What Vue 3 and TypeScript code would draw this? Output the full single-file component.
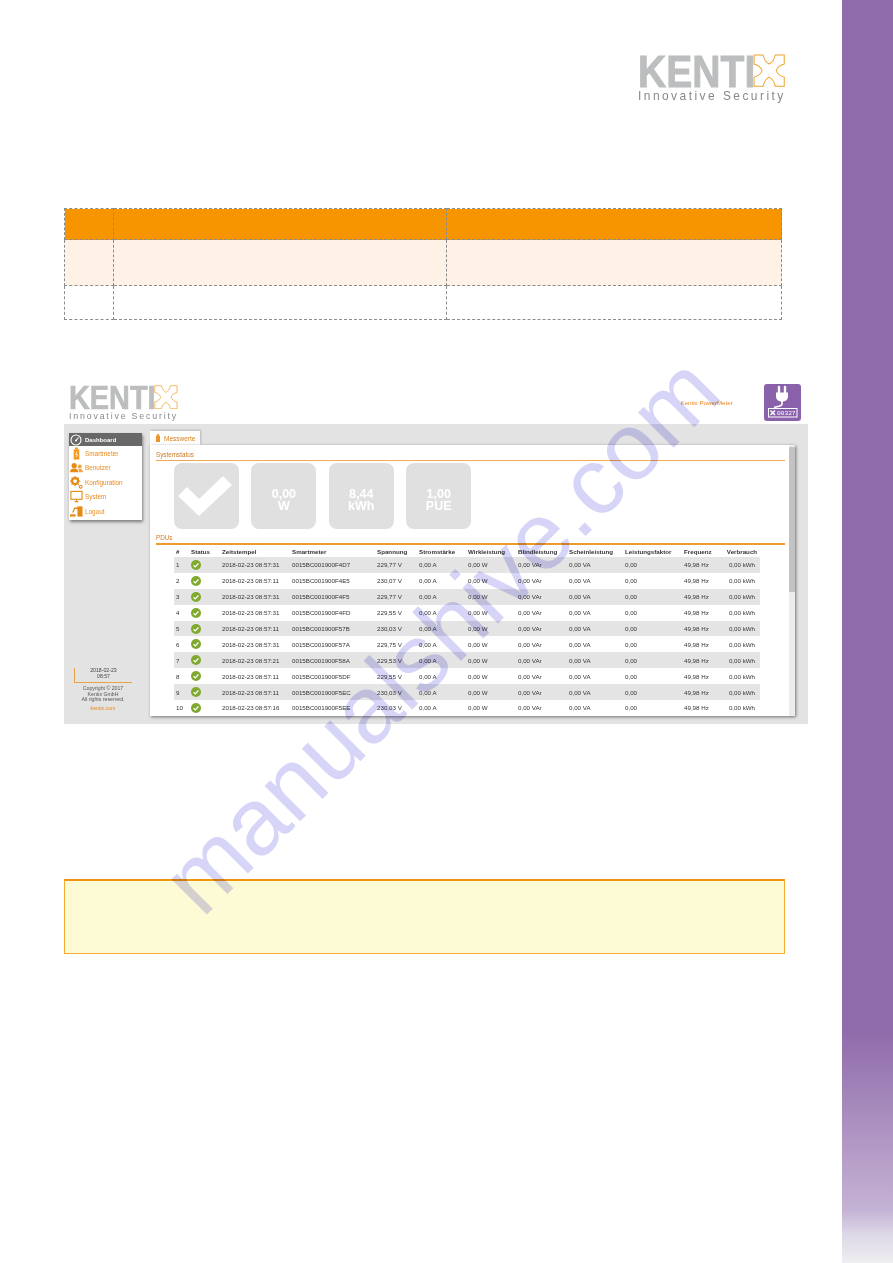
<script setup lang="ts">
interface Row {
  id: number
  time: string
  meter: string
  volt: string
}

const columns = ['#', 'Status', 'Zeitstempel', 'Smartmeter', 'Spannung', 'Stromstärke', 'Wirkleistung', 'Blindleistung', 'Scheinleistung', 'Leistungsfaktor', 'Frequenz', 'Verbrauch']
const widths = [15, 31, 70, 85, 42, 49, 50, 51, 56, 59, 40, 38]

const rows: Row[] = [
  { id: 1, time: '08:57:31', meter: '0015BC001900F4D7', volt: '229,77 V' },
  { id: 2, time: '08:57:11', meter: '0015BC001900F4E5', volt: '230,07 V' },
  { id: 3, time: '08:57:31', meter: '0015BC001900F4F5', volt: '229,77 V' },
  { id: 4, time: '08:57:31', meter: '0015BC001900F4FD', volt: '229,55 V' },
  { id: 5, time: '08:57:11', meter: '0015BC001900F57B', volt: '230,03 V' },
  { id: 6, time: '08:57:31', meter: '0015BC001900F57A', volt: '229,75 V' },
  { id: 7, time: '08:57:21', meter: '0015BC001900F58A', volt: '229,53 V' },
  { id: 8, time: '08:57:11', meter: '0015BC001900F5DF', volt: '229,55 V' },
  { id: 9, time: '08:57:11', meter: '0015BC001900F5EC', volt: '230,03 V' },
  { id: 10, time: '08:57:16', meter: '0015BC001900F5EE', volt: '230,03 V' }
]

const tiles = [
  ['0,00', 'W'],
  ['8,44', 'kWh'],
  ['1,00', 'PUE']
]

const xPath = 'M1 1H10C11 6 14 9 16 10C18 9 21 6 22 1H31V10C27 11 24 14 23 16.5C24 19 27 22 31 23V32H22C21 27 18 24 16 23C14 24 11 27 10 32H1V23C5 22 8 19 9 16.5C8 14 5 11 1 10Z'
</script>

<template>
  <div class="page">
    <main class="main">
      <div class="logo logo-top">
        <div class="logo-mark">
          <span class="logo-word">KENTI</span>
          <svg class="logo-x" viewBox="0 0 32 33"><path :d="xPath" /></svg>
        </div>
        <div class="logo-tag">Innovative Security</div>
      </div>

      <table class="doc-table">
        <colgroup>
          <col style="width: 49px" />
          <col style="width: 333px" />
          <col />
        </colgroup>
        <tbody>
          <tr class="doc-head"><td></td><td></td><td></td></tr>
          <tr class="doc-tint"><td></td><td></td><td></td></tr>
          <tr class="doc-plain"><td></td><td></td><td></td></tr>
        </tbody>
      </table>

      <section class="shot">
        <header class="shot-head">
          <div class="logo logo-small">
            <div class="logo-mark">
              <span class="logo-word">KENTI</span>
              <svg class="logo-x" viewBox="0 0 32 33"><path :d="xPath" /></svg>
            </div>
            <div class="logo-tag">Innovative Security</div>
          </div>
          <span class="app-title">Kentix PowerMeter</span>
          <svg class="app-icon" viewBox="0 0 37 37">
            <rect width="37" height="37" rx="3" fill="#8a62ab" />
            <path d="M15 3v6M21 3v6" stroke="#fff" stroke-width="2.4" stroke-linecap="round" />
            <path d="M12 8.500h12v4c0 3-2.500 5-6 5s-6-2-6-5z" fill="#fff" />
            <path d="M18 17v3c0 2.500-4 2-8 3.500" stroke="#fff" stroke-width="1.600" fill="none" />
            <rect x="4.500" y="24.500" width="28.500" height="8.500" fill="none" stroke="#fff" />
            <path d="M6.500 26.500l4.500 4.500M11 26.500l-4.500 4.500" stroke="#fff" stroke-width="1.400" />
            <text x="13" y="31" class="app-icon-text">00327</text>
          </svg>
        </header>

        <div class="panel">
          <aside class="aside">
            <nav class="menu">
              <div class="menu-active">
                <svg class="menu-gauge" viewBox="0 0 12 12">
                  <circle cx="6" cy="6" r="5" fill="none" stroke="#fff" stroke-width="1.100" />
                  <path d="M6 6.500L8.500 3.500" stroke="#fff" stroke-width="1.100" />
                  <circle cx="6" cy="6.500" r="1" fill="#fff" />
                </svg>
                Dashboard
              </div>
              <div class="menu-item">
                <svg viewBox="0 0 14 14"><rect x="4" y="2.500" width="6" height="11" fill="#f29a1f" /><rect x="5.500" y="0.500" width="3" height="2" fill="#f29a1f" /><path d="M7.500 5L6 8h2l-1.500 3" stroke="#fff" stroke-width=".8" fill="none" /></svg>
                Smartmeter
              </div>
              <div class="menu-item">
                <svg viewBox="0 0 14 14"><circle cx="4.500" cy="5" r="2.800" fill="#e68a14" /><path d="M0 12c0-3 2-4 4.500-4S9 9 9 12z" fill="#e68a14" /><circle cx="10.500" cy="6" r="2.200" fill="#f2a640" /><path d="M9.500 12c0-2 0-3-.5-3.500 2-.5 5 0 5 3.500z" fill="#f2a640" /></svg>
                Benutzer
              </div>
              <div class="menu-item">
                <svg viewBox="0 0 14 14"><circle cx="5.500" cy="5.500" r="3.200" fill="none" stroke="#e68a14" stroke-width="2.400" /><path d="M5.500 0v2M5.500 9v2M0 5.500h2M9 5.500h2M1.700 1.700l1.400 1.400M8 8l1.400 1.400M9.300 1.700L8 3M3 8L1.700 9.300" stroke="#e68a14" stroke-width="1.300" /><circle cx="11.500" cy="11.500" r="1.500" fill="none" stroke="#e68a14" stroke-width="1.200" /></svg>
                Konfiguration
              </div>
              <div class="menu-item">
                <svg viewBox="0 0 14 14"><rect x="1" y="1.500" width="12" height="8.500" fill="#fff" stroke="#e68a14" stroke-width="1.200" /><path d="M5 12.500h4M7 10v2.500" stroke="#e68a14" stroke-width="1.200" /></svg>
                System
              </div>
              <div class="menu-item">
                <svg viewBox="0 0 14 14"><path d="M0 10h6v2.500H0z" fill="#e68a14" /><path d="M8 1.500h5.500v11H8V9.500" fill="#e68a14" /><path d="M3 8l2-4.500h4" stroke="#e68a14" stroke-width="1.400" fill="none" /></svg>
                Logout
              </div>
            </nav>

            <div class="aside-foot">
              <div class="clock">2018-02-23<br />08:57</div>
              <div class="copy">Copyright © 2017<br />Kentix GmbH<br />All rights reserved.</div>
              <div class="copy-link">kentix.com</div>
            </div>
          </aside>

          <div class="content">
            <div class="tab">
              <svg viewBox="0 0 6 8"><rect x="1" y="1.500" width="4" height="6.500" fill="#f0922a" /><rect x="2" y="0" width="2" height="1.500" fill="#f0922a" /></svg>
              Messwerte
            </div>
            <div class="card">
              <div class="card-body">
                <div class="section-title">Systemstatus</div>
                <div class="tiles">
                  <div class="tile">
                    <svg class="tile-check" viewBox="0 0 54 44"><path d="M0 22L9 13 21 25 45 2 54 11 21 42Z" fill="#fff" /></svg>
                  </div>
                  <div v-for="t in tiles" :key="t[1]" class="tile tile-value">
                    <span>{{ t[0] }}</span>
                    <span>{{ t[1] }}</span>
                  </div>
                </div>
                <div class="section-title section-strong">PDUs</div>
                <table class="data">
                  <colgroup>
                    <col v-for="(w, i) in widths" :key="i" :style="{ width: w + 'px' }" />
                  </colgroup>
                  <thead>
                    <tr>
                      <th v-for="c in columns" :key="c">{{ c }}</th>
                    </tr>
                  </thead>
                  <tbody>
                    <tr v-for="r in rows" :key="r.id">
                      <td>{{ r.id }}</td>
                      <td>
                        <svg class="ok" viewBox="0 0 10 10">
                          <circle cx="5" cy="5" r="5" fill="#7fa92c" />
                          <path d="M2.600 5.200l1.700 1.700 3.200-3.500" stroke="#fff" stroke-width="1.300" fill="none" />
                        </svg>
                      </td>
                      <td>2018-02-23 {{ r.time }}</td>
                      <td>{{ r.meter }}</td>
                      <td>{{ r.volt }}</td>
                      <td>0,00 A</td>
                      <td>0,00 W</td>
                      <td>0,00 VAr</td>
                      <td>0,00 VA</td>
                      <td>0,00</td>
                      <td>49,98 Hz</td>
                      <td>0,00 kWh</td>
                    </tr>
                  </tbody>
                </table>
              </div>
              <div class="scrollbar"><div class="scroll-thumb"></div></div>
            </div>
          </div>
        </div>
      </section>

      <div class="note"></div>
    </main>

    <div class="side-band"></div>
    <div class="watermark">manualshive.com</div>
  </div>
</template>

<style>
html,
body {
  background: #fff;
}
</style>

<style scoped>
.page {
  position: relative;
  display: flex;
  height: 1263px;
  overflow: hidden;
  background: #fff;
  font-family: "Liberation Sans", Arial, sans-serif;
}

.main {
  width: 842px;
  flex: none;
}

.side-band {
  flex: 1;
  background: linear-gradient(#8f6bab 0, #8f6bab 1030px, #ab8fbf 1120px, #c4b2d4 1210px, #dcd6e6 1233px, #efeef1 1263px);
}

.logo {
  display: flex;
  flex-direction: column;
  width: 3.5em;
  line-height: 1;
}

.logo-top {
  font-size: 42px;
  margin: 53px 0 0 638px;
  height: 50px;
}

.logo-small {
  font-size: 31px;
}

.logo-mark {
  display: flex;
  align-items: flex-start;
  height: .82em;
}

.logo-word {
  display: block;
  flex: none;
  width: 2.57em;
  font-size: 1.07em;
  font-weight: 700;
  line-height: .8em;
  margin-top: .02em;
  color: #bcbdbe;
  -webkit-text-stroke: .02em #bcbdbe;
  transform: scaleX(.87);
  transform-origin: left;
}

.logo-x {
  width: .77em;
  height: .79em;
  margin-top: .02em;
  flex: none;
}

.logo-x path {
  fill: #fff;
  stroke: #eda32e;
  stroke-width: 1;
}

.logo-tag {
  font-size: .285em;
  letter-spacing: .205em;
  color: #86888a;
  white-space: nowrap;
  margin-top: .3em;
}

.doc-table {
  margin: 105px 0 0 64px;
  width: 718px;
  height: 111px;
  border-collapse: collapse;
  table-layout: fixed;
}

.doc-table td {
  border: 1px dashed #8c8c8c;
  padding: 0;
}

.doc-head {
  height: 31px;
  background: #f69500;
}

.doc-tint {
  height: 46px;
  background: #fdf2e5;
}

.doc-plain {
  height: 34px;
}

.shot {
  width: 744px;
  height: 346px;
  margin: 58px 0 0 64px;
  filter: blur(.3px);
}

.shot-head {
  display: flex;
  align-items: flex-start;
  height: 46px;
  padding: 6px 7px 0 5px;
  box-sizing: border-box;
}

.app-title {
  margin: 15px 0 0 503px;
  width: 83px;
  font-size: 6.200px;
  color: #e8861f;
  white-space: nowrap;
}

.app-icon {
  width: 37px;
  height: 37px;
  flex: none;
}

.app-icon-text {
  font-size: 6.200px;
  fill: #fff;
  font-family: "Liberation Mono", monospace;
}

.panel {
  display: flex;
  height: 300px;
  background: #e3e3e3;
}

.aside {
  width: 86px;
  flex: none;
  padding: 9px 0 0 5px;
  box-sizing: border-box;
  display: flex;
  flex-direction: column;
  justify-content: space-between;
}

.menu {
  width: 73px;
  height: 87px;
  background: #fff;
  box-shadow: 1px 2px 3px rgba(0, 0, 0, .45);
}

.menu-active {
  display: flex;
  align-items: center;
  gap: 3px;
  height: 13px;
  padding-left: 1px;
  background: #686868;
  color: #fff;
  font-size: 6px;
  font-weight: 700;
}

.menu-gauge {
  width: 12px;
  height: 12px;
}

.menu-item {
  display: flex;
  align-items: center;
  gap: 2px;
  height: 14.500px;
  padding-left: 1px;
  font-size: 6.400px;
  color: #e88a1e;
}

.menu-item svg {
  width: 13px;
  height: 13px;
  flex: none;
}

.aside-foot {
  width: 66px;
  margin: 0 0 13px 1px;
  text-align: center;
  font-size: 5.200px;
  line-height: 5.500px;
  color: #555;
}

.clock {
  border-left: 1px solid #e8a24a;
  border-bottom: 1px solid #e8a24a;
  padding-bottom: 3px;
  margin: 0 4px 3px 4px;
  color: #444;
}

.copy-link {
  margin-top: 3px;
  color: #e8861f;
}

.content {
  width: 645px;
  flex: none;
  padding-top: 7px;
}

.tab {
  display: flex;
  align-items: center;
  gap: 3px;
  width: 50px;
  height: 14px;
  padding-left: 5px;
  box-sizing: border-box;
  background: #fff;
  box-shadow: 1px -1px 2px rgba(0, 0, 0, .2);
  font-size: 6.500px;
  color: #d97f1a;
}

.tab svg {
  width: 6px;
  height: 8px;
}

.card {
  display: flex;
  height: 271px;
  overflow: hidden;
  background: #fff;
  box-shadow: 1px 1px 3px rgba(0, 0, 0, .5);
}

.card-body {
  flex: 1;
  min-width: 0;
  padding: 0 4px 0 6px;
}

.section-title {
  height: 15px;
  line-height: 19px;
  border-bottom: 1px solid #eeaa55;
  font-size: 6.300px;
  color: #c97a20;
}

.section-strong {
  height: 14px;
  border-bottom: 2px solid #ee9a2c;
  line-height: 18px;
}

.tiles {
  display: flex;
  gap: 12.400px;
  padding: 2px 0 0 18px;
  height: 68px;
  box-sizing: border-box;
}

.tile {
  display: flex;
  flex-direction: column;
  align-items: center;
  justify-content: center;
  width: 65px;
  height: 66px;
  box-sizing: border-box;
  border-radius: 8px;
  background: #e0e0e0;
  color: #fff;
  font-size: 12.500px;
  font-weight: 700;
  line-height: 12.500px;
}

.tile-value {
  padding-top: 8px;
}

.tile-check {
  width: 56px;
  height: 44px;
  margin-right: 3px;
}

.data {
  margin-left: 18px;
  width: 586px;
  border-collapse: collapse;
  table-layout: fixed;
  font-size: 6.200px;
  color: #333;
}

.data th {
  height: 12px;
  padding: 0 0 0 2px;
  text-align: left;
  font-weight: 700;
  white-space: nowrap;
}

.data td {
  height: 15.900px;
  padding: 0 0 0 2px;
  white-space: nowrap;
}

.data tbody tr:nth-child(odd) {
  background: #e4e4e4;
}

.data th:last-child,
.data td:last-child {
  text-align: center;
}

.ok {
  display: block;
  width: 10px;
  height: 10px;
}

.scrollbar {
  width: 6px;
  flex: none;
  padding-top: 2px;
  background: #ececec;
}

.scroll-thumb {
  height: 145px;
  background: #c3c3c3;
  border-radius: 1px;
}

.note {
  height: 75px;
  width: 721px;
  margin: 155px 0 0 64px;
  box-sizing: border-box;
  background: #fdfad6;
  border: 1px solid #f5ab2e;
  border-top: 2px solid #f1950f;
}

.watermark {
  position: absolute;
  left: 203px;
  top: 839px;
  font-size: 95px;
  line-height: 95px;
  white-space: nowrap;
  color: #d6d4f7;
  mix-blend-mode: multiply;
  transform: rotate(-45deg);
  transform-origin: 0 81px;
  pointer-events: none;
}
</style>
